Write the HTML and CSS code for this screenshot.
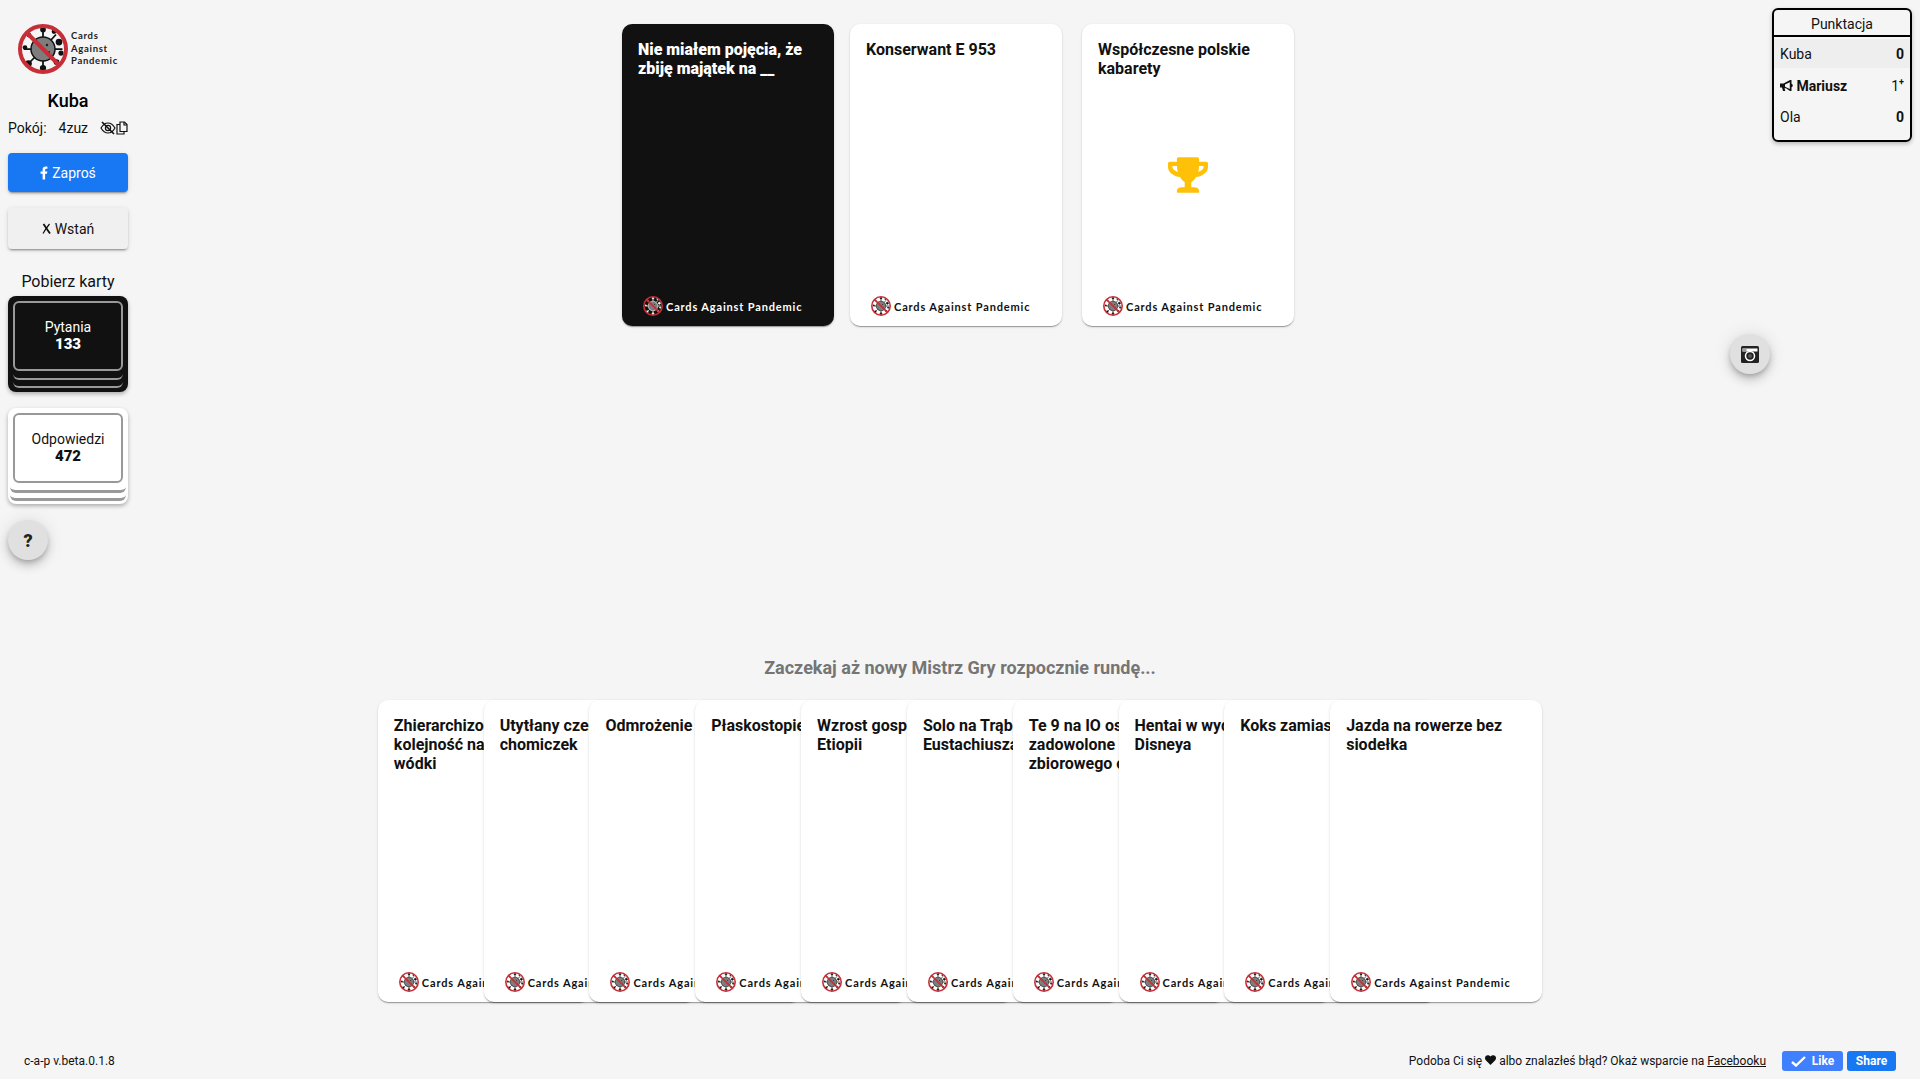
FILE: index.html
```html
<!DOCTYPE html>
<html lang="en">
<head>
    <meta charset="UTF-8">
    <meta name="viewport" content="width=device-width, initial-scale=1.0">
    <title>Cards Against Pandemic</title>
    <link rel="stylesheet" href="styles.css">
</head>
<body>
    <svg class="sprites" width="0" height="0">
        <symbol id="virus" viewBox="0 0 100 100">
            <g stroke="currentColor" stroke-width="3.5" fill="currentColor">
                <path d="M50 26V11M66 32l10-11M74 50h15M68 66l9 9M50 74v14M33 67L22 78M26 50H12M33 33L23 22" fill="none"/>
                <circle cx="50" cy="11" r="4"/>
                <circle cx="72" cy="15" r="3"/>
                <circle cx="82" cy="36" r="5"/>
                <circle cx="86" cy="58" r="3.5"/>
                <circle cx="77" cy="76" r="4"/>
                <circle cx="50" cy="88" r="4.5"/>
                <circle cx="21" cy="79" r="5"/>
                <circle cx="14" cy="47" r="3"/>
                <circle cx="22" cy="22" r="3"/>
            </g>
            <circle cx="50" cy="50" r="24" fill="#7d7d7d" stroke="currentColor" stroke-width="3"/>
            <circle cx="58" cy="42" r="2.5" fill="#222"/>
            <circle cx="42" cy="40" r="2" fill="#222"/>
            <circle cx="62" cy="56" r="2" fill="#222"/>
            <path d="M17 17L83 83" stroke="#c62f37" stroke-width="8"/>
            <circle cx="50" cy="50" r="46" fill="none" stroke="#c62f37" stroke-width="8"/>
        </symbol>
    </svg>

    <div class="app">
        <aside class="sidebar">
            <div class="logo">
                <svg class="logo-mark"><use href="#virus"/></svg>
                <div class="logo-text">Cards<br>Against<br>Pandemic</div>
            </div>
            <div class="player-name">Kuba</div>
            <div class="room">
                <span>Pokój:</span>
                <span class="room-code">4zuz</span>
                <span class="room-icons">
                    <svg width="16" height="14" viewBox="0 0 16 14" fill="none" stroke="#111" stroke-width="1.2">
                        <path d="M1 7c2-3.4 4.400-5 7-5s5 1.600 7 5c-2 3.400-4.400 5-7 5S3 10.400 1 7z"/>
                        <circle cx="8" cy="7" r="2.600"/>
                        <path d="M2 1l12 12" stroke-width="1.600"/>
                    </svg>
                    <svg width="12" height="14" viewBox="0 0 12 14" fill="none" stroke="#111" stroke-width="1.200">
                        <path d="M4 1h4.500L11 3.500V10.500H4z" fill="#f5f5f5"/>
                        <path d="M4 3.500H1V13h7v-2.500"/>
                        <path d="M8 1v3h3"/>
                    </svg>
                </span>
            </div>
            <button class="btn btn-fb">
                <svg width="8" height="14" viewBox="0 0 320 512" fill="#fff"><path d="M279.140 288l14.220-92.660h-88.910v-60.130c0-25.350 12.420-50.060 52.240-50.060h40.420V6.260S260.430 0 225.360 0c-73.220 0-121.080 44.380-121.080 124.720v70.620H22.890V288h81.390v224h100.170V288z"/></svg>
                Zaproś
            </button>
            <button class="btn btn-leave">
                <svg width="9" height="11" viewBox="0 0 9 11" fill="none" stroke="#111"><path d="M1.500 1c2 3 4 6 6.500 9.500" stroke-width="1.800"/><path d="M7.500 1C5 4 3 7 1 10.500" stroke-width="1.200"/></svg>
                Wstań
            </button>
            <div class="deck-title">Pobierz karty</div>
            <div class="deck deck-black">
                <div class="deck-frame">
                    <span>Pytania</span>
                    <b>133</b>
                </div>
            </div>
            <div class="deck deck-white">
                <div class="deck-frame">
                    <span>Odpowiedzi</span>
                    <b>472</b>
                </div>
            </div>
            <button class="fab">?</button>
        </aside>

        <main class="board">
            <div class="table-row">
                <div class="card card-black">
                    <div class="card-text">Nie miałem pojęcia, że zbiję majątek na __</div>
                    <div class="card-brand"><svg class="brand-mark"><use href="#virus"/></svg>Cards Against Pandemic</div>
                </div>
                <div class="card">
                    <div class="card-text">Konserwant E 953</div>
                    <div class="card-brand"><svg class="brand-mark"><use href="#virus"/></svg>Cards Against Pandemic</div>
                </div>
                <div class="card card-winner">
                    <div class="card-text">Współczesne polskie kabarety</div>
                    <svg class="trophy" viewBox="0 0 576 512" fill="#ffc107"><path d="M552 64H448V24c0-13.300-10.700-24-24-24H152c-13.300 0-24 10.700-24 24v40H24C10.700 64 0 74.700 0 88v56c0 35.700 22.500 72.400 61.900 100.700 31.500 22.700 69.800 37.100 110 41.700C203.300 338.500 240 360 240 360v72h-48c-35.300 0-64 20.700-64 56v12c0 6.600 5.400 12 12 12h296c6.600 0 12-5.400 12-12v-12c0-35.300-28.700-56-64-56h-48v-72s36.700-21.500 68.100-73.600c40.300-4.600 78.700-19 110-41.700 39.300-28.300 61.900-65 61.900-100.700V88c0-13.300-10.700-24-24-24zM99.300 192.800C74.900 175.200 64 155.600 64 144v-16h64.200c1 32.600 5.800 61.200 12.800 86.200-15.100-5.200-29.200-12.400-41.700-21.400zM512 144c0 16.100-17.700 36.100-35.300 48.800-12.500 9-26.700 16.200-41.800 21.400 7-25 11.800-53.600 12.800-86.200H512v16z"/></svg>
                    <div class="card-brand"><svg class="brand-mark"><use href="#virus"/></svg>Cards Against Pandemic</div>
                </div>
            </div>

            <div class="hint">Zaczekaj aż nowy Mistrz Gry rozpocznie rundę...</div>

            <div class="hand">
                <div class="card">
                    <div class="card-text">Zhierarchizowana kolejność nalewania wódki</div>
                    <div class="card-brand"><svg class="brand-mark"><use href="#virus"/></svg>Cards Against Pandemic</div>
                </div>
                <div class="card">
                    <div class="card-text">Utytłany czekoladą chomiczek</div>
                    <div class="card-brand"><svg class="brand-mark"><use href="#virus"/></svg>Cards Against Pandemic</div>
                </div>
                <div class="card">
                    <div class="card-text">Odmrożenie</div>
                    <div class="card-brand"><svg class="brand-mark"><use href="#virus"/></svg>Cards Against Pandemic</div>
                </div>
                <div class="card">
                    <div class="card-text">Płaskostopie</div>
                    <div class="card-brand"><svg class="brand-mark"><use href="#virus"/></svg>Cards Against Pandemic</div>
                </div>
                <div class="card">
                    <div class="card-text">Wzrost gospodarczy Etiopii</div>
                    <div class="card-brand"><svg class="brand-mark"><use href="#virus"/></svg>Cards Against Pandemic</div>
                </div>
                <div class="card">
                    <div class="card-text">Solo na Trąbce Eustachiusza</div>
                    <div class="card-brand"><svg class="brand-mark"><use href="#virus"/></svg>Cards Against Pandemic</div>
                </div>
                <div class="card">
                    <div class="card-text">Te 9 na IO osób zadowolone ze zbiorowego odpoczynku</div>
                    <div class="card-brand"><svg class="brand-mark"><use href="#virus"/></svg>Cards Against Pandemic</div>
                </div>
                <div class="card">
                    <div class="card-text">Hentai w wydaniu Disneya</div>
                    <div class="card-brand"><svg class="brand-mark"><use href="#virus"/></svg>Cards Against Pandemic</div>
                </div>
                <div class="card">
                    <div class="card-text">Koks zamiast kawy</div>
                    <div class="card-brand"><svg class="brand-mark"><use href="#virus"/></svg>Cards Against Pandemic</div>
                </div>
                <div class="card">
                    <div class="card-text">Jazda na rowerze bez siodełka</div>
                    <div class="card-brand"><svg class="brand-mark"><use href="#virus"/></svg>Cards Against Pandemic</div>
                </div>
            </div>
        </main>

        <aside class="score">
            <div class="score-title">Punktacja</div>
            <div class="score-row score-me"><span>Kuba</span><b>0</b></div>
            <div class="score-row score-master">
                <span>
                    <svg width="13" height="11" viewBox="0 0 13 11" fill="#111"><path d="M0 3.500h3.500L10 0h1.500v3.700c.8.300 1.300 1 1.300 1.800s-.5 1.500-1.300 1.800V11H10L6 8.200H4.500L5.300 11H3L2 7.500H0zM5 4.500v2.200l4.800 2.200V2.200z" fill-rule="evenodd"/></svg>
                    Mariusz
                </span>
                <span>1<sup>+</sup></span>
            </div>
            <div class="score-row"><span>Ola</span><b>0</b></div>
        </aside>

        <button class="fab fab-camera">
            <svg width="18" height="17" viewBox="0 0 18 17">
                <rect width="18" height="17" rx="1.500" fill="#222"/>
                <rect x="1.500" y="2.500" width="15" height="3" fill="#fff"/>
                <rect x="1.500" y="2.500" width="4" height="3" fill="#999"/>
                <circle cx="9" cy="10" r="4.500" fill="#222" stroke="#fff" stroke-width="1.500"/>
                <circle cx="9" cy="10" r="2" fill="#555"/>
            </svg>
        </button>

        <footer class="footer">
            <span>c-a-p v.beta.0.1.8</span>
            <div class="support">
                <span>Podoba Ci się
                    <svg width="11" height="10" viewBox="0 0 11 10" fill="#111"><path d="M5.500 10L.8 5.200C-.4 3.900-.2 1.800 1 .8 2.300-.3 4.200 0 5.500 1.600 6.800 0 8.700-.3 10 .8c1.200 1 1.400 3.100.2 4.400z"/></svg>
                    albo znalazłeś błąd? Okaż wsparcie na <a href="#">Facebooku</a></span>
                <span class="fb-buttons">
                    <span class="fb-btn fb-like">
                        <svg width="15" height="11" viewBox="0 0 15 11" fill="none" stroke="#fff" stroke-width="2.400"><path d="M1 6l4 3.500L14 1"/></svg>
                        Like
                    </span>
                    <span class="fb-btn fb-share">Share</span>
                </span>
            </div>
        </footer>
    </div>
</body>
</html>
```

FILE: styles.css
```css
* {
    box-sizing: border-box;
}
html, body {
    margin: 0;
    height: 100%;
    overflow: hidden;
}
body {
    font-family: Roboto, Arial, sans-serif;
    font-size: 14px;
    color: #111;
    background-color: #f5f5f5;
}
.sprites {
    position: absolute;
}
.app {
    position: relative;
    height: 1079px;
    display: grid;
    grid-template-columns: 136px 1fr 156px;
    grid-template-rows: 1fr 40px;
}

/* sidebar */
.sidebar {
    padding: 24px 8px 0 8px;
    display: flex;
    flex-direction: column;
}
.logo {
    display: flex;
    align-items: center;
    gap: 3px;
    padding-left: 10px;
    height: 50px;
}
.logo-mark {
    width: 50px;
    height: 50px;
    flex: none;
}
.logo-text {
    font-family: Lato, sans-serif;
    font-weight: 700;
    font-size: 9.500px;
    line-height: 12.500px;
    letter-spacing: 0.7px;
    color: #222;
}
.player-name {
    margin-top: 16px;
    height: 21px;
    font-size: 18px;
    font-weight: 500;
    line-height: 21px;
    text-align: center;
    color: #000;
}
.room {
    margin-top: 8px;
    height: 17px;
    display: flex;
    align-items: center;
    line-height: 16px;
}
.room-code {
    margin-left: 12px;
}
.room-icons {
    margin-left: auto;
    display: flex;
    align-items: center;
}
.btn {
    display: flex;
    align-items: center;
    justify-content: center;
    gap: 4px;
    width: 120px;
    border: none;
    border-radius: 4px;
    font-family: Roboto, Arial, sans-serif;
    font-size: 14px;
    box-shadow: 0 3px 1px -2px rgba(0, 0, 0, 0.2), 0 2px 2px 0 rgba(0, 0, 0, 0.14), 0 1px 5px 0 rgba(0, 0, 0, 0.12);
}
.btn-fb {
    margin-top: 17px;
    height: 39px;
    color: #fff;
    background-color: #1877f2;
}
.btn-leave {
    margin-top: 16px;
    height: 41px;
    color: #111;
    background-color: #f0f0f0;
}
.deck-title {
    margin-top: 23px;
    height: 19px;
    width: 120px;
    font-size: 16px;
    line-height: 19px;
    text-align: center;
}
.deck {
    position: relative;
    z-index: 0;
    width: 120px;
    height: 96px;
    padding: 5px;
    border-radius: 8px;
    box-shadow: 0 2px 4px rgba(0, 0, 0, 0.3);
}
.deck-black {
    margin-top: 5px;
    background-color: #111;
    color: #fff;
}
.deck-white {
    margin-top: 16px;
    background-color: #fff;
    color: #111;
}
.deck-frame {
    position: relative;
    height: 70px;
    display: flex;
    flex-direction: column;
    align-items: center;
    justify-content: center;
    border: 2px solid #999;
    border-radius: 6px;
    background-color: inherit;
    line-height: 17px;
}
.deck-frame b {
    font-size: 15px;
    font-weight: 900;
}
.deck::before, .deck::after {
    content: "";
    position: absolute;
    z-index: -1;
    left: 5px;
    right: 5px;
    height: 70px;
    border-bottom: 2px solid #999;
    border-radius: 6px;
}
.deck::before {
    top: 12px;
}
.deck::after {
    top: 20px;
}
.deck-white::before, .deck-white::after {
    left: 2px;
    right: 2px;
    border-bottom: 3px solid #999;
}
.fab {
    width: 40px;
    height: 40px;
    margin-top: 16px;
    border: none;
    border-radius: 50%;
    font-family: Roboto, Arial, sans-serif;
    font-size: 18px;
    font-weight: 900;
    color: #222;
    background-color: #e0e0e0;
    box-shadow: 0 3px 5px -1px rgba(0, 0, 0, 0.2), 0 6px 10px 0 rgba(0, 0, 0, 0.14), 0 1px 18px 0 rgba(0, 0, 0, 0.12);
}
.fab-camera {
    position: absolute;
    left: 1730px;
    top: 334px;
    margin: 0;
    padding: 0;
    display: flex;
    align-items: center;
    justify-content: center;
}

/* board */
.board {
    display: flex;
    flex-direction: column;
    align-items: center;
    padding-top: 24px;
    margin-right: -20px;
}
.table-row {
    display: flex;
    gap: 16px;
    margin-right: 4px;
}
.table-row .card-winner {
    margin-left: 4px;
}
.card {
    position: relative;
    flex: none;
    width: 212px;
    height: 302px;
    padding: 16px;
    display: flex;
    flex-direction: column;
    border-radius: 10px;
    background-color: #fff;
    box-shadow: 0 2px 1px -1px rgba(0, 0, 0, 0.2), 0 1px 1px 0 rgba(0, 0, 0, 0.14), 0 1px 3px 0 rgba(0, 0, 0, 0.12);
}
.card-black {
    background-color: #111;
    color: #fff;
}
.card-text {
    font-size: 16px;
    font-weight: 700;
    line-height: 19px;
}
.card-black .card-text {
    font-weight: 900;
}
.card-brand {
    margin-top: auto;
    margin-bottom: -6px;
    height: 20px;
    display: flex;
    align-items: center;
    gap: 3px;
    padding-left: 5px;
    white-space: nowrap;
    font-family: Lato, sans-serif;
    font-size: 11px;
    font-weight: 700;
    letter-spacing: 0.85px;
}
.brand-mark {
    width: 20px;
    height: 20px;
    flex: none;
}
.trophy {
    width: 40px;
    height: 36px;
    flex: none;
    margin: 79px auto 0;
}
.hint {
    margin-top: 316px;
    height: 52px;
    font-size: 18px;
    font-weight: 700;
    line-height: 52px;
    color: #757575;
    text-align: center;
}
.hand {
    margin-top: 6px;
    display: flex;
}
.hand .card + .card {
    margin-left: -106.200px;
}

/* score */
.score {
    position: absolute;
    top: 8px;
    left: 1772px;
    width: 140px;
    height: 134px;
    border: 2px solid #000;
    border-radius: 6px;
    box-shadow: 0 2px 4px rgba(0, 0, 0, 0.25);
}
.score-title {
    height: 27px;
    border-bottom: 2px solid #000;
    text-align: center;
    line-height: 29px;
}
.score-row {
    height: 28px;
    padding: 0 6px;
    display: flex;
    align-items: center;
    justify-content: space-between;
}
.score-me {
    margin-top: 2px;
    height: 29px;
    background-color: #eee;
}
.score-master {
    font-weight: 700;
    height: 35px;
}
.score-master span:last-child {
    font-weight: 400;
}
.score-master sup {
    font-size: 9px;
    font-weight: 700;
    line-height: 0;
}

/* footer */
.footer {
    grid-column: 1 / -1;
    display: flex;
    align-items: center;
    justify-content: space-between;
    padding: 4px 24px 0 24px;
    font-size: 12px;
}
.support {
    display: flex;
    align-items: center;
}
.support a {
    color: #111;
}
.fb-buttons {
    display: flex;
    gap: 4px;
    margin-left: 16px;
}
.fb-btn {
    height: 20px;
    display: flex;
    align-items: center;
    justify-content: center;
    gap: 6px;
    border-radius: 3px;
    color: #fff;
    font-weight: 700;
}
.fb-like {
    width: 61px;
    background-color: #4080ff;
}
.fb-share {
    width: 49px;
    background-color: #1877f2;
}
```
